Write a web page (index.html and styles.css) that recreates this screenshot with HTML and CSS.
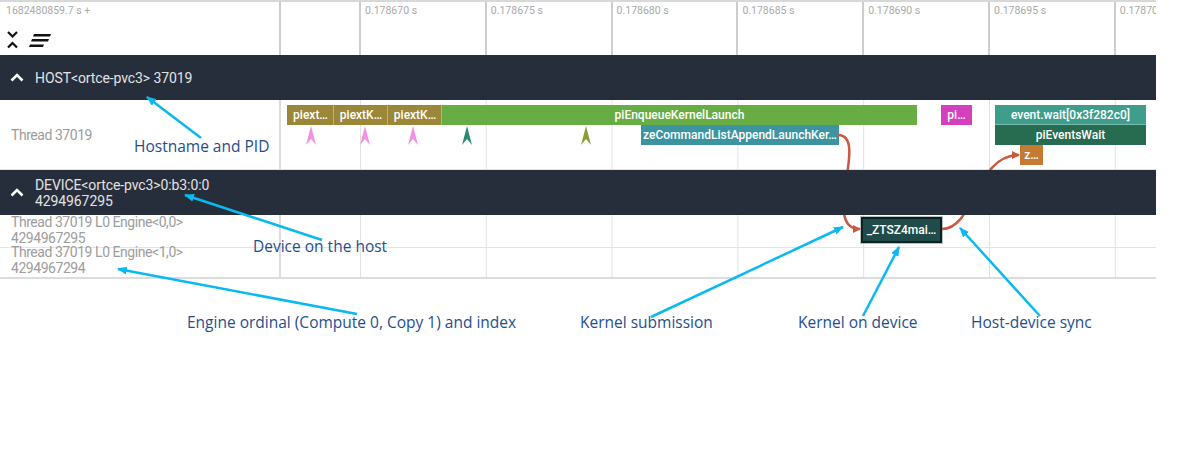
FILE: index.html
```html
<!DOCTYPE html>
<html>
<head>
<meta charset="utf-8">
<title>Timeline</title>
<link rel="stylesheet" href="styles.css">
</head>
<body>
<div class="page">
  <div class="app">
    <div class="header">
      <div class="hdr-left">
        <div class="offset">1682480859.7 s +</div>
        <div class="hdr-icons">
          <svg class="ic-fold" width="14" height="20" viewBox="0 0 14 20"><polyline points="2,3 6.5,7.5 11,3" fill="none" stroke="#111" stroke-width="2.2"/><polyline points="2,18.5 6.5,14 11,18.5" fill="none" stroke="#111" stroke-width="2.2"/></svg>
          <svg class="ic-sort" width="24" height="20" viewBox="0 0 24 20"><polygon points="6,5 23,5 22,7.4 5,7.4" fill="#111"/><polygon points="4,10 21,10 20,12.4 3,12.4" fill="#111"/><polygon points="2,15.5 16,15.5 15,17.9 1,17.9" fill="#111"/></svg>
        </div>
      </div>
      <div class="ruler">
        <div class="tick">0.178670 s</div>
        <div class="tick">0.178675 s</div>
        <div class="tick">0.178680 s</div>
        <div class="tick">0.178685 s</div>
        <div class="tick">0.178690 s</div>
        <div class="tick">0.178695 s</div>
        <div class="tick">0.178700 s</div>
      </div>
    </div>

    <div class="band band-host">
      <svg class="chev" width="14" height="9" viewBox="0 0 14 9"><polyline points="1.5,7.5 7,2 12.5,7.5" fill="none" stroke="#fff" stroke-width="2.6"/></svg>
      <span class="title">HOST&lt;ortce-pvc3&gt; 37019</span>
    </div>

    <div class="row row-host">
      <div class="label">Thread 37019</div>
      <div class="lane">
        <div class="slice c-olive" style="left:6px;top:5px;width:47px">piext…</div>
        <div class="slice c-olive" style="left:53px;top:5px;width:54px">piextK…</div>
        <div class="slice c-olive" style="left:107px;top:5px;width:54px">piextK…</div>
        <div class="slice c-green" style="left:161px;top:5px;width:475px">piEnqueueKernelLaunch</div>
        <div class="slice c-magenta" style="left:660px;top:5px;width:31px">pi…</div>
        <div class="slice c-teal" style="left:714px;top:5px;width:151px">event.wait[0x3f282c0]</div>
        <div class="slice c-blue" style="left:360px;top:25px;width:198px">zeCommandListAppendLaunchKer…</div>
        <div class="slice c-dgreen" style="left:714px;top:25px;width:151px">piEventsWait</div>
        <div class="slice c-orange" style="left:739px;top:45px;width:23px">z…</div>

        <svg class="flow" style="left:25px" viewBox="0 0 10 19"><path d="M5 0 L10 19 L5 13 L0 19 Z" fill="#f290e2"/></svg>
        <svg class="flow" style="left:79px" viewBox="0 0 10 19"><path d="M5 0 L10 19 L5 13 L0 19 Z" fill="#f290e2"/></svg>
        <svg class="flow" style="left:127px" viewBox="0 0 10 19"><path d="M5 0 L10 19 L5 13 L0 19 Z" fill="#f290e2"/></svg>
        <svg class="flow" style="left:181px" viewBox="0 0 10 19"><path d="M5 0 L10 19 L5 13 L0 19 Z" fill="#2c8a72"/></svg>
        <svg class="flow" style="left:300px" viewBox="0 0 10 19"><path d="M5 0 L10 19 L5 13 L0 19 Z" fill="#8c9a3c"/></svg>
      </div>
    </div>

    <div class="band band-device">
      <svg class="chev" width="14" height="9" viewBox="0 0 14 9"><polyline points="1.5,7.5 7,2 12.5,7.5" fill="none" stroke="#fff" stroke-width="2.6"/></svg>
      <span class="title">DEVICE&lt;ortce-pvc3&gt;0:b3:0:0<br>4294967295</span>
    </div>

    <div class="row row-dev1">
      <div class="label dlabel">Thread 37019 L0 Engine&lt;0,0&gt;<br>4294967295</div>
      <div class="lane">
        <div class="kernel">_ZTSZ4mai…</div>
      </div>
    </div>
    <div class="row row-dev2">
      <div class="label dlabel dlabel2">Thread 37019 L0 Engine&lt;1,0&gt;<br>4294967294</div>
      <div class="lane"></div>
    </div>
  </div>

  <svg class="flows" width="1186" height="459" viewBox="0 0 1186 459">
    <defs>
      <marker id="fh" markerWidth="8" markerHeight="8" refX="7" refY="4" orient="auto" markerUnits="userSpaceOnUse">
        <path d="M0 0 L8 4 L0 8 Z" fill="#c75a40"/>
      </marker>
    </defs>
    <path d="M838 135 C870 135 820 229 860 229" fill="none" stroke="#c75a40" stroke-width="2.5" marker-end="url(#fh)"/>
    <path d="M942 229 C975 229 975 155 1019 155" fill="none" stroke="#c75a40" stroke-width="2.5" marker-end="url(#fh)"/>
  </svg>

  <svg class="callouts" width="1186" height="459" viewBox="0 0 1186 459">
    <defs>
      <marker id="ch" markerWidth="10" markerHeight="8" refX="9" refY="4" orient="auto" markerUnits="userSpaceOnUse">
        <path d="M0 0 L10 4 L0 8 Z" fill="#09b9ef"/>
      </marker>
    </defs>
    <g stroke="#09b9ef" stroke-width="2.5" fill="none" marker-end="url(#ch)">
      <line x1="201" y1="138" x2="147" y2="97"/>
      <line x1="322" y1="240" x2="185" y2="195"/>
      <line x1="357" y1="314" x2="118" y2="269"/>
      <line x1="651" y1="317" x2="843" y2="227"/>
      <line x1="863" y1="316" x2="899" y2="247"/>
      <line x1="1040" y1="316" x2="960" y2="228"/>
    </g>
  </svg>

  <div class="note n-host">Hostname and PID</div>
  <div class="note n-dev">Device on the host</div>
  <div class="note n-eng">Engine ordinal (Compute 0, Copy 1) and index</div>
  <div class="note n-sub">Kernel submission</div>
  <div class="note n-kdev">Kernel on device</div>
  <div class="note n-sync">Host-device sync</div>
</div>
</body>
</html>
```

FILE: styles.css
```css
* { box-sizing: border-box; }
body {
  margin: 0;
  background: #fff;
  font-family: Roboto, "Liberation Sans", sans-serif;
}
.page {
  position: relative;
  width: 1186px;
  height: 459px;
  overflow: hidden;
}
.app {
  width: 1156px;
  overflow: hidden;
}

/* header */
.header {
  display: flex;
  height: 55px;
  border-top: 2px solid #d8d8d8;
}
.hdr-left {
  flex: 0 0 281px;
  border-right: 2px solid #cdcdcd;
  padding: 3px 0 0 6px;
}
.offset {
  font-size: 10.5px;
  line-height: 12px;
  color: #a9a9a9;
}
.hdr-icons {
  display: flex;
  align-items: flex-start;
  gap: 8px;
  margin-top: 12px;
}
.ruler {
  flex: 1;
  display: flex;
  padding-left: 78px;
  overflow: hidden;
}
.tick {
  flex: 0 0 125.8px;
  border-left: 2px solid #cdcdcd;
  padding: 3px 0 0 4px;
  font-size: 10.5px;
  line-height: 12px;
  color: #a9a9a9;
  white-space: nowrap;
  overflow: hidden;
}

/* group bands */
.band {
  position: relative;
  z-index: 2;
  height: 45px;
  background: #272e3b;
  color: #e2e2e2;
  display: flex;
  align-items: center;
  gap: 11px;
  padding-left: 10px;
  font-size: 14px;
}
.band .title { line-height: 16px; letter-spacing: -0.1px; }

/* rows */
.row { display: flex; }
.label {
  flex: 0 0 281px;
  border-right: 2px solid #dcdcdc;
  color: #9b9b9b;
  font-size: 14px;
  letter-spacing: -0.45px;
  padding-left: 11px;
  white-space: nowrap;
}
.lane {
  flex: 1;
  position: relative;
  background-image: linear-gradient(to right, #e2e2e2 0, #e2e2e2 1px, transparent 1px);
  background-size: 125.8px 100%;
  background-position: 79px 0;
  background-repeat: repeat-x;
}
.row-host {
  height: 70px;
  border-bottom: 1px solid #e0e0e0;
}
.row-host .label {
  display: flex;
  align-items: center;
}
.row-dev1 {
  height: 33px;
  border-bottom: 1px solid #e4e4e4;
}
.row-dev2 {
  height: 31px;
  border-bottom: 2px solid #dcdcdc;
}
.dlabel {
  line-height: 15.5px;
  color: #9d9d9d;
}
.dlabel2 { margin-top: -3px; }

/* slices */
.slice {
  position: absolute;
  height: 20px;
  line-height: 20px;
  color: #fff;
  font-size: 12px;
  font-weight: 500;
  text-align: center;
  white-space: nowrap;
  overflow: hidden;
}
.c-olive { background: #9b8737; box-shadow: inset -1px 0 rgba(255,255,255,0.35); }
.c-green { background: #67ad44; }
.c-magenta { background: #d43fbe; }
.c-teal { background: #3f9e8b; box-shadow: inset 0 -1px rgba(255,255,255,0.3); }
.c-blue { background: #3b94a0; }
.c-dgreen { background: #276c50; }
.c-orange { background: #c47a32; }

.flow {
  position: absolute;
  top: 26px;
  width: 10px;
  height: 19px;
}

.kernel {
  position: absolute;
  left: 580px;
  top: 2px;
  width: 81px;
  height: 26px;
  background: #1f4b4a;
  border: 2px solid #0c2221;
  box-shadow: 0 0 0 1px rgba(150,170,170,0.7);
  color: #fff;
  font-size: 12px;
  font-weight: 500;
  line-height: 22px;
  text-align: center;
  white-space: nowrap;
  overflow: hidden;
}

/* overlays */
.flows {
  position: absolute;
  left: 0;
  top: 0;
  z-index: 1;
  pointer-events: none;
}
.callouts {
  position: absolute;
  left: 0;
  top: 0;
  z-index: 3;
  pointer-events: none;
}
.note {
  position: absolute;
  z-index: 3;
  font-family: "Open Sans", "Noto Sans", sans-serif;
  font-size: 15.5px;
  line-height: 1;
  color: #1f4e8f;
  white-space: nowrap;
}
.n-host { left: 134px; top: 139px; }
.n-dev { left: 253px; top: 239px; }
.n-eng { left: 187px; top: 315px; }
.n-sub { left: 580px; top: 315px; }
.n-kdev { left: 798px; top: 315px; }
.n-sync { left: 971px; top: 315px; }
```
